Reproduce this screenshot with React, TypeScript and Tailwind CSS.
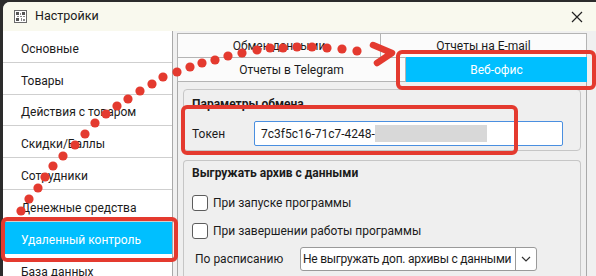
import * as React from "react";

const menuItems = [
  { label: "Основные", h: "h-[32px]" },
  { label: "Товары", h: "h-[32px]" },
  { label: "Действия с товаром", h: "h-[31px]" },
  { label: "Скидки/Баллы", h: "h-[32px]" },
  { label: "Сотрудники", h: "h-[32px]" },
  { label: "Денежные средства", h: "h-[32px]" },
  { label: "Удаленный контроль", h: "h-[32px]", active: true },
  { label: "База данных", h: "h-[32px]" },
];

// dots of the hand-drawn arrow, in page pixels
const dots: [number, number][] = [
  [21, 211], [29, 199], [38, 188], [45, 177], [53, 166], [63, 156],
  [75, 145], [85, 134], [95, 123], [106, 114], [117, 106], [128, 99],
  [140, 91], [152, 84], [163, 77], [177, 72], [190, 67], [202, 63],
  [215, 60], [228, 56], [242, 53], [257, 50], [270, 48], [283, 48],
  [297, 47], [312, 47], [327, 48], [342, 49], [357, 51],
];

function AppIcon() {
  return (
    <svg width="13" height="13" viewBox="0 0 13 13" className="shrink-0">
      <rect x="0.5" y="0.5" width="12" height="12" fill="#fff" stroke="#6b6b6b" />
      <rect x="2" y="2" width="3" height="3" fill="#555" />
      <rect x="8" y="2" width="3" height="3" fill="#555" />
      <rect x="2" y="8" width="3" height="3" fill="#555" />
      <rect x="6" y="3" width="1" height="2" fill="#888" />
      <rect x="6" y="6" width="2" height="1" fill="#888" />
      <rect x="9" y="6" width="2" height="1" fill="#888" />
      <rect x="3" y="6" width="2" height="1" fill="#888" />
      <rect x="7" y="8" width="1" height="3" fill="#888" />
      <rect x="9" y="9" width="2" height="2" fill="#888" />
    </svg>
  );
}

function Checkbox({ label }: { label: string }) {
  return (
    <div className="flex h-[28px] items-center gap-[5px]">
      <span className="h-[16px] w-[16px] rounded-[3px] border border-[#5c5c5c] bg-white" />
      <span>{label}</span>
    </div>
  );
}

export default function App() {
  return (
    <div className="relative h-[276px] w-[596px] overflow-hidden bg-[#2c2c2c] font-['Roboto','Noto_Sans',sans-serif] text-[12px] text-[#1b1b1b]">
      <div className="ml-[3px] mt-[2px] flex h-[274px] flex-col overflow-hidden rounded-tl-[7px] bg-[#f0f0f0]">
        {/* title bar */}
        <div className="flex h-[29px] shrink-0 items-center bg-[#f9f9ee] pl-[11px] pr-[13px]">
          <AppIcon />
          <span className="ml-[8px] text-[12.5px]">Настройки</span>
          <svg width="12" height="12" viewBox="0 0 12 12" className="ml-auto">
            <path d="M1 1 L11 11 M11 1 L1 11" stroke="#222" strokeWidth="1.2" />
          </svg>
        </div>

        <div className="flex flex-1">
          {/* left menu */}
          <div className="flex w-[170px] shrink-0 flex-col border-r border-[#a9a9a9] bg-white">
            {menuItems.map((item) =>
              item.active ? (
                <div
                  key={item.label}
                  className={`${item.h} flex shrink-0 items-center bg-[#00bfff] pl-[18px] pt-[3px] text-white`}
                >
                  {item.label}
                </div>
              ) : (
                <div
                  key={item.label}
                  className={`${item.h} flex shrink-0 items-center border-b border-[#cfcfcf] pl-[18px] pt-[4px]`}
                >
                  {item.label}
                </div>
              ),
            )}
          </div>

          {/* right side */}
          <div className="flex flex-1 flex-col pl-[4px] pr-[9px] pt-[2px]">
            <div className="flex h-[24px] shrink-0">
              <div className="flex w-[204px] items-center justify-center border border-b-0 border-[#b4b4b4] bg-[#fbfbfb]">
                Обмен данными
              </div>
              <div className="flex flex-1 items-center justify-center border border-b-0 border-l-0 border-[#b4b4b4] bg-[#fbfbfb]">
                Отчеты на E-mail
              </div>
            </div>
            <div className="flex h-[25px] shrink-0">
              <div className="flex w-[229px] items-center justify-center border border-[#b4b4b4] bg-[#fbfbfb]">
                Отчеты в Telegram
              </div>
              <div className="flex flex-1 items-center justify-center bg-[#00bfff] text-white">
                Веб-офис
              </div>
            </div>

            {/* tab page */}
            <div className="flex flex-1 flex-col gap-[9px] border border-t-0 border-[#a9a9a9] bg-[#efefef] px-[5px] pt-[7px]">
              <div className="h-[62px] shrink-0 rounded-[4px] border border-[#c6c6c6] px-[8px] pt-[5px]">
                <div className="h-[20px] font-bold">Параметры обмена</div>
                <div className="mt-[6px] flex items-center">
                  <span className="w-[62px]">Токен</span>
                  <div className="flex h-[25px] w-[309px] items-center rounded-[2px] border border-[#4a8fe0] bg-white pl-[6px]">
                    <span>7c3f5c16-71c7-4248-</span>
                    <span className="h-[17px] w-[112px] bg-[#d8d8d8]" />
                  </div>
                </div>
              </div>

              <div className="flex-1 rounded-t-[4px] border border-b-0 border-[#c6c6c6] px-[8px] pt-[3px]">
                <div className="h-[20px] font-bold">Выгружать архив с данными</div>
                <div className="mt-[5px]">
                  <Checkbox label="При запуске программы" />
                  <Checkbox label="При завершении работы программы" />
                </div>
                <div className="mt-[2px] flex items-center">
                  <span className="w-[108px] pl-[3px]">По расписанию</span>
                  <div className="flex h-[24px] w-[237px] items-center rounded-[3px] border border-[#9a9a9a] bg-white">
                    <span className="flex-1 whitespace-nowrap pl-[2px] tracking-[-0.25px]">
                      Не выгружать доп. архивы с данными
                    </span>
                    <span className="flex h-full w-[21px] shrink-0 items-center justify-center border-l border-[#9a9a9a]">
                      <svg width="10" height="6" viewBox="0 0 10 6">
                        <path d="M1 1 L5 5 L9 1" fill="none" stroke="#333" strokeWidth="1.2" />
                      </svg>
                    </span>
                  </div>
                </div>
              </div>
            </div>
          </div>
        </div>
      </div>

      {/* annotation overlay */}
      <svg
        className="pointer-events-none absolute left-0 top-0"
        width="596"
        height="276"
        viewBox="0 0 596 276"
      >
        {dots.map(([x, y]) => (
          <circle key={`${x}-${y}`} cx={x} cy={y} r="4.6" fill="#e43a2f" />
        ))}
        <path
          d="M373 45 L392 53 L377 63"
          fill="none"
          stroke="#e43a2f"
          strokeWidth="6.5"
          strokeLinecap="round"
          strokeLinejoin="round"
        />
      </svg>
      <div className="pointer-events-none absolute left-[1px] top-[217px] h-[45px] w-[177px] rounded-[6px] border-[4px] border-[#e43a2f]" />
      <div className="pointer-events-none absolute left-[181px] top-[105px] h-[50px] w-[337px] rounded-[6px] border-[4px] border-[#e43a2f]" />
      <div className="pointer-events-none absolute left-[396px] top-[50px] h-[40px] w-[200px] rounded-[6px] border-[4px] border-[#e43a2f]" />
    </div>
  );
}
